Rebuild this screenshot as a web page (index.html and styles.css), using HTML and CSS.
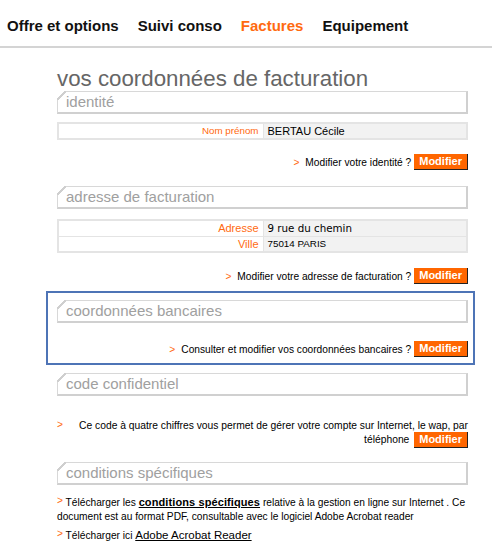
FILE: index.html
```html
<!DOCTYPE html>
<html lang="fr">
<head>
<meta charset="utf-8">
<title>Factures</title>
<link rel="stylesheet" href="styles.css">
</head>
<body>
<nav class="nav">
  <a class="nav-item">Offre et options</a>
  <a class="nav-item">Suivi conso</a>
  <a class="nav-item active">Factures</a>
  <a class="nav-item">Equipement</a>
</nav>
<main class="content">
  <h1 class="title">vos coordonnées de facturation</h1>

  <section class="block">
    <h2 class="sec-head">identité</h2>
    <table class="data">
      <tr><td class="lbl lbl-narrow">Nom prénom</td><td class="val">BERTAU Cécile</td></tr>
    </table>
    <div class="action"><span class="arrow">&gt;</span> Modifier votre identité ? <button class="btn">Modifier</button></div>
  </section>

  <section class="block">
    <h2 class="sec-head">adresse de facturation</h2>
    <table class="data data-second">
      <tr><td class="lbl">Adresse</td><td class="val verd">9 rue du chemin</td></tr>
      <tr><td class="lbl">Ville</td><td class="val small">75014 PARIS</td></tr>
    </table>
    <div class="action action-tight"><span class="arrow">&gt;</span> Modifier votre adresse de facturation ? <button class="btn">Modifier</button></div>
  </section>

  <section class="block highlight">
    <h2 class="sec-head">coordonnées bancaires</h2>
    <div class="action"><span class="arrow">&gt;</span> Consulter et modifier vos coordonnées bancaires ? <button class="btn">Modifier</button></div>
  </section>

  <section class="block">
    <h2 class="sec-head">code confidentiel</h2>
    <div class="code-row">
      <span class="arrow">&gt;</span>
      <p class="code-text">Ce code à quatre chiffres vous permet de gérer votre compte sur Internet, le wap, par téléphone <button class="btn">Modifier</button></p>
    </div>
  </section>

  <section class="block">
    <h2 class="sec-head">conditions spécifiques</h2>
    <p class="cond first"><span class="arrow up">&gt;</span> Télécharger les <a class="strong-link">conditions spécifiques</a> relative à la gestion en ligne sur Internet . Ce document est au format PDF, consultable avec le logiciel Adobe Acrobat reader</p>
    <p class="cond"><span class="arrow up">&gt;</span> Télécharger ici <a class="plain-link">Adobe Acrobat Reader</a></p>
  </section>
</main>
</body>
</html>
```
FILE: styles.css
```css
* { box-sizing: border-box; }
body {
  margin: 0;
  background: #fff;
  font-family: "Liberation Sans", Arial, sans-serif;
  color: #000;
}
.nav {
  display: flex;
  gap: 19px;
  padding: 17px 0 11px 7px;
  border-bottom: 2px solid #d4d4d4;
}
.nav-item {
  font-weight: bold;
  font-size: 15px;
  line-height: 18px;
  color: #111;
}
.nav-item.active { color: #ff6a10; }

.content {
  margin-left: 57px;
  width: 411px;
}
.title {
  margin: 18px 0 0;
  font-weight: normal;
  font-size: 22.3px;
  line-height: 25px;
  color: #666;
}
.sec-head {
  position: relative;
  margin: 0;
  height: 23px;
  padding-left: 8px;
  font-weight: normal;
  font-size: 15px;
  line-height: 20px;
  color: #a0a0a0;
  border-top: 1px solid #d8d8d8;
  border-left: 1px solid #d8d8d8;
  border-right: 2px solid #d0d0d0;
  border-bottom: 2px solid #d0d0d0;
}
.sec-head::before {
  content: "";
  position: absolute;
  left: -1px;
  top: -1px;
  width: 9px;
  height: 9px;
  background: linear-gradient(135deg, #fff 0, #fff 44%, #cfcfcf 44%, #cfcfcf 58%, transparent 58%);
}
.data {
  width: 100%;
  margin-top: 8px;
  border-collapse: collapse;
  border: 2px solid #e4e4e4;
  font-size: 11px;
}
.data-second { margin-top: 10px; }
.data td {
  height: 16px;
  padding: 0 4px;
  border: 1px solid #e4e4e4;
  line-height: 14px;
}
.lbl {
  width: 205px;
  text-align: right;
  color: #ff6a10;
  background: #fff;
}
.lbl-narrow { font-size: 9.8px; }
.val {
  background: #f2f2f2;
  color: #000;
}
.val.verd { font-family: "DejaVu Sans", Verdana, sans-serif; font-size: 10.3px; }
.val.small { font-size: 9.8px; }
.action {
  display: flex;
  justify-content: flex-end;
  align-items: center;
  gap: 3px;
  height: 16px;
  margin-top: 14px;
  margin-bottom: 16px;
  font-size: 10.2px;
  color: #000;
}
.action-tight { margin-top: 15px; margin-bottom: 7px; }
.arrow { color: #ff6a10; font-size: 10.2px; margin-right: 3px; }
.btn {
  margin: 0;
  padding: 0 5px;
  height: 16px;
  border: none;
  border-right: 1px solid #222;
  border-bottom: 1px solid #222;
  background: #ff6600;
  color: #fff;
  font-family: "Liberation Sans", Arial, sans-serif;
  font-weight: bold;
  font-size: 11px;
  line-height: 15px;
  vertical-align: middle;
}
.highlight {
  margin-left: -11px;
  margin-right: -7px;
  padding: 7px 5px 6px 9px;
  border: 2px solid #4e74b6;
  margin-bottom: 8px;
}
.highlight .action { margin-top: 18px; margin-bottom: 0; }
.code-row {
  display: grid;
  grid-template-columns: 22px 1fr;
  margin-top: 23px;
  margin-bottom: 15px;
  font-size: 10.3px;
}
.code-text {
  margin: 0;
  text-align: right;
  line-height: 14px;
}
.code-text .btn { margin: -1px 0 -1px 2px; }
.cond {
  margin: 3px 0 0;
  font-size: 10.2px;
  line-height: 14px;
}
.cond.first { margin-top: 9px; }
.arrow.up { vertical-align: 2px; margin-right: 0; }
.strong-link {
  font-weight: bold;
  font-size: 11px;
  letter-spacing: 0.1px;
  color: #000;
  text-decoration: underline;
}
.plain-link {
  font-size: 11.5px;
  color: #000;
  text-decoration: underline;
}
```
